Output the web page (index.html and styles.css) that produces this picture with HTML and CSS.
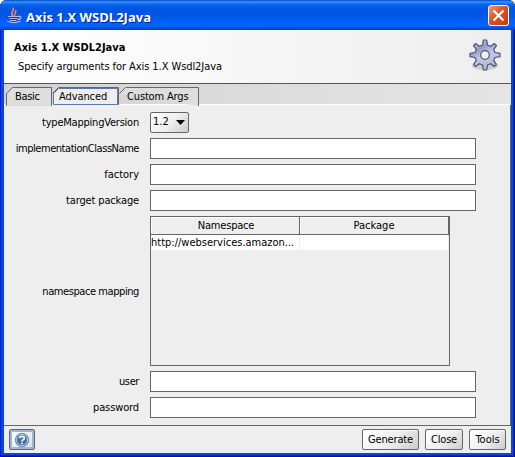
FILE: index.html
```html
<!DOCTYPE html>
<html lang="en">
<head>
<meta charset="utf-8">
<title>Axis 1.X WSDL2Java</title>
<link rel="stylesheet" href="styles.css">
</head>
<body>
<div class="window">
  <header class="titlebar">
    <svg class="java" width="16" height="17" viewBox="0 0 16 17" fill="none">
      <path d="M6 9C2 5.500 8 5 6 .5M8 9C6 7 10 6 8.500 3" stroke="#f08068" stroke-width="1.6"/>
      <path d="M1 9.500H11L10 13.500H3Z" fill="#303070"/>
      <path d="M1 9.500H11.500M2 11.500H10.500M3 13.500H9.500M11 9.500C15.500 8.500 14.500 12.500 10.500 12.500M0 14Q7 17.500 13.500 14" stroke="#b5b7ed" stroke-width="1.1"/>
    </svg>
    <span class="caption">Axis 1.X WSDL2Java</span>
    <button class="x" aria-label="Close window"><svg width="13" height="13" viewBox="0 0 13 13"><path d="M1.5 1.5L11.5 11.5M11.5 1.5L1.5 11.5" stroke="#fff" stroke-width="2.2"/></svg></button>
  </header>
  <main class="client">
    <section class="banner">
      <div class="banner-text">
        <h1>Axis 1.X WSDL2Java</h1>
        <p>Specify arguments for Axis 1.X Wsdl2Java</p>
      </div>
      <svg class="gear" width="34" height="34" viewBox="-17 -17 34 34">
        <defs><linearGradient id="g" x1="0" y1="0" x2=".5" y2="1"><stop offset="0" stop-color="#dfe0f4"/><stop offset=".35" stop-color="#8d9dc6"/><stop offset=".6" stop-color="#c5c5e4"/><stop offset="1" stop-color="#b5b5d6"/></linearGradient></defs>
        <ellipse cx="0" cy="11" rx="13" ry="4" fill="#ccc"/>
        <path fill="url(#g)" fill-rule="evenodd" stroke="#4b5678" stroke-width="1.2" stroke-linejoin="round" d="M-2.500-10L-1.700-15H1.700L2.500-10L5.700-8.700L9.300-11.500L11.500-9.300L8.700-5.700L10-2.500L15-1.700V1.700L10 2.500L8.700 5.700L11.500 9.300L9.300 11.500L5.700 8.700L2.500 10L1.700 15H-1.700L-2.500 10L-5.700 8.700L-9.300 11.500L-11.500 9.300L-8.700 5.700L-10 2.500L-15 1.700V-1.700L-10-2.500L-8.700-5.700L-11.500-9.300L-9.300-11.500L-5.700-8.700ZM4.300 0A4.300 4.300 0 1 0-4.300 0A4.300 4.300 0 1 0 4.300 0Z"/>
      </svg>
    </section>
    <nav class="tabs">
      <div class="tab basic"><svg width="46" height="19"><path d="M.5 19V6.500L6.500.5H45.500V19" /></svg><span>Basic</span></div>
      <div class="tab advanced"><svg width="67" height="19"><path class="outer" d="M.5 6.500L6.500.5H66.500V18"/><path class="inner" d="M1.500 17.500V6.500L6.500 1.500H65.500V17.500Z"/></svg><span>Advanced</span></div>
      <div class="tab custom"><svg width="80" height="19"><path d="M.5 6.500L6.500.5H79.500V19"/></svg><span>Custom Args</span></div>
    </nav>
    <section class="form">
      <label class="l-type">typeMappingVersion</label>
      <div class="combo"><span>1.2</span><svg width="9" height="5"><path d="M0 0H9L4.500 5Z"/></svg></div>
      <label class="l-impl">implementationClassName</label><input class="field">
      <label class="l-factory">factory</label><input class="field">
      <label class="l-target">target package</label><input class="field">
      <label class="l-ns">namespace mapping</label>
      <div class="table">
        <div class="th"><span class="h-ns">Namespace</span></div><div class="th"><span class="h-pkg">Package</span></div>
        <div class="td"><span class="url">http://webservices.amazon...</span></div><div class="td"></div>
      </div>
      <label class="l-user">user</label><input class="field">
      <label class="l-pass">password</label><input class="field">
    </section>
    <footer class="actions">
      <button class="help" aria-label="Help"><svg width="16" height="16" viewBox="0 0 16 16"><circle cx="8" cy="8" r="6.700" fill="#416fae" stroke="#6c93c8"/><circle cx="8" cy="8" r="5.500" fill="none" stroke="#c5d7ee"/><path d="M5.700 6.300C5.700 3.700 10.300 3.700 10.300 6.300C10.300 7.900 8 7.700 8 9.400M8 10.600V12" fill="none" stroke="#fff" stroke-width="1.600"/></svg></button>
      <button class="btn generate"><span>Generate</span></button>
      <button class="btn close"><span>Close</span></button>
      <button class="btn tools"><span>Tools</span></button>
    </footer>
  </main>
</div>
</body>
</html>
```

FILE: styles.css
```css
* { box-sizing: border-box; }
body { margin: 0; background: #fff; font: 11px/14px "DejaVu Sans Condensed", "DejaVu Sans", sans-serif; font-stretch: condensed; color: #000; }
.window { width: 515px; height: 457px; padding: 0 4px 4px; border-radius: 7px 7px 0 0; background: #0048e8; box-shadow: inset 1px 0 #001bc0, inset -1px 0 #00108f, inset -2px 0 #0030c0, inset 0 -1px #00108f, inset 0 -2px #0028b8; }
.titlebar { height: 30px; margin: 0 -4px; padding: 1px 6px 0 7px; display: flex; align-items: center; border-radius: 7px 7px 0 0; background: linear-gradient(#0048c8 0, #3d91ff 2px, #086af0 4px, #0055e0 8px, #0055e5 16px, #0062fa 22px, #0064ff 26px, #0048d5 29px, #003fc2 30px); }
.caption { margin-left: 3px; padding-top: 2px; color: #fff; font: bold 13px/18px "Open Sans", sans-serif; letter-spacing: 0; text-shadow: 1px 1px #00248c; white-space: nowrap; }
.x { margin-left: auto; width: 21px; height: 21px; padding: 0; display: grid; place-items: center; border: 1px solid #fff; border-radius: 3px; background: linear-gradient(135deg, #f09a7e, #df4f25 45%, #c63a0c); }
.client { height: 423px; background: #eee; display: flex; flex-direction: column; }
.banner { height: 54px; border-bottom: 1px solid #555; background: linear-gradient(90deg, #fff, #eee); display: flex; justify-content: space-between; }
.banner-text { padding: 11px 0 0 10px; white-space: nowrap; }
h1 { margin: 0; font: bold 11px/14px "DejaVu Sans Condensed", sans-serif; font-stretch: condensed; }
p { margin: 5px 0 0 4px; letter-spacing: -.07px; }
.gear { margin: 8px 9px 0 0; }
.tabs { height: 21px; padding: 3px 0 0 2px; display: flex; background: linear-gradient(90deg, #d2d2d2, #e5e5e5); border-bottom: 1px solid #fff; }
.tab { position: relative; height: 18px; padding: 3px 0 0 9px; white-space: nowrap; }
.tab svg { position: absolute; left: 0; top: 0; fill: #dedede; stroke: #666; }
.tab span { position: relative; }
.basic { width: 46px; letter-spacing: -.3px; }
.advanced { width: 67px; padding-left: 7px; letter-spacing: -.1px; }
.advanced .outer { fill: #eee; }
.advanced .inner { fill: #eee; stroke: #5b78ac; }
.custom { width: 80px; padding-left: 8px; letter-spacing: -.15px; }
.form { height: 321px; padding-top: 6px; border-right: 1px solid #666; border-bottom: 1px solid #666; display: grid; grid-template-columns: 135px 1fr; grid-template-rows: 22px 21px 21px 21px 150px 21px 21px; gap: 5px 11px; align-content: start; align-items: center; }
.form label { justify-self: end; white-space: nowrap; }
.l-type { letter-spacing: -.22px; padding-top: 2px; }
.l-impl { letter-spacing: -.45px; }
.l-target { letter-spacing: -.15px; }
.l-ns { letter-spacing: -.42px; padding-top: 1px; }
.l-user { letter-spacing: -.4px; }
.l-pass { letter-spacing: -.12px; }
.field { width: 326px; height: 21px; border: 1px solid #666; padding: 0 3px; background: #fff; }
.combo { width: 39px; height: 21px; padding: 0 3px 0 2px; display: flex; align-items: center; justify-content: space-between; border: 1px solid #666; border-radius: 2px; background: linear-gradient(135deg, #fff, #eee 55%, #ccc); }
.table { width: 300px; height: 150px; border: 1px solid #666; display: grid; grid-template-columns: 149px 149px; grid-template-rows: 18px 15px; align-content: start; }
.th { height: 18px; border-right: 1px solid #666; border-bottom: 1px solid #666; box-shadow: inset 1px 1px #fff; text-align: center; line-height: 18px; }
.h-ns { padding-left: 2px; letter-spacing: -.2px; }
.td { height: 15px; background: #fff; border-right: 1px solid #eee; line-height: 15px; white-space: nowrap; }
.actions { height: 27px; padding: 3px 5px 0; display: flex; }
.help { width: 26px; height: 21px; margin-right: auto; padding: 0; border: 1px solid #666; border-radius: 2px; box-shadow: inset 0 0 0 2px #a2b4d3; background: linear-gradient(135deg, #fff, #ddd); display: grid; place-items: center; }
.btn { height: 21px; padding: 0; border: 1px solid #666; border-radius: 2px; background: linear-gradient(135deg, #fff, #eee 55%, #ccc); box-shadow: inset 1px 1px #fff; font: inherit; color: #000; white-space: nowrap; }
.generate { width: 57px; letter-spacing: -.15px; }
.close { width: 38px; margin-left: 6px; letter-spacing: -.2px; }
.tools { width: 37px; margin-left: 6px; }
```
